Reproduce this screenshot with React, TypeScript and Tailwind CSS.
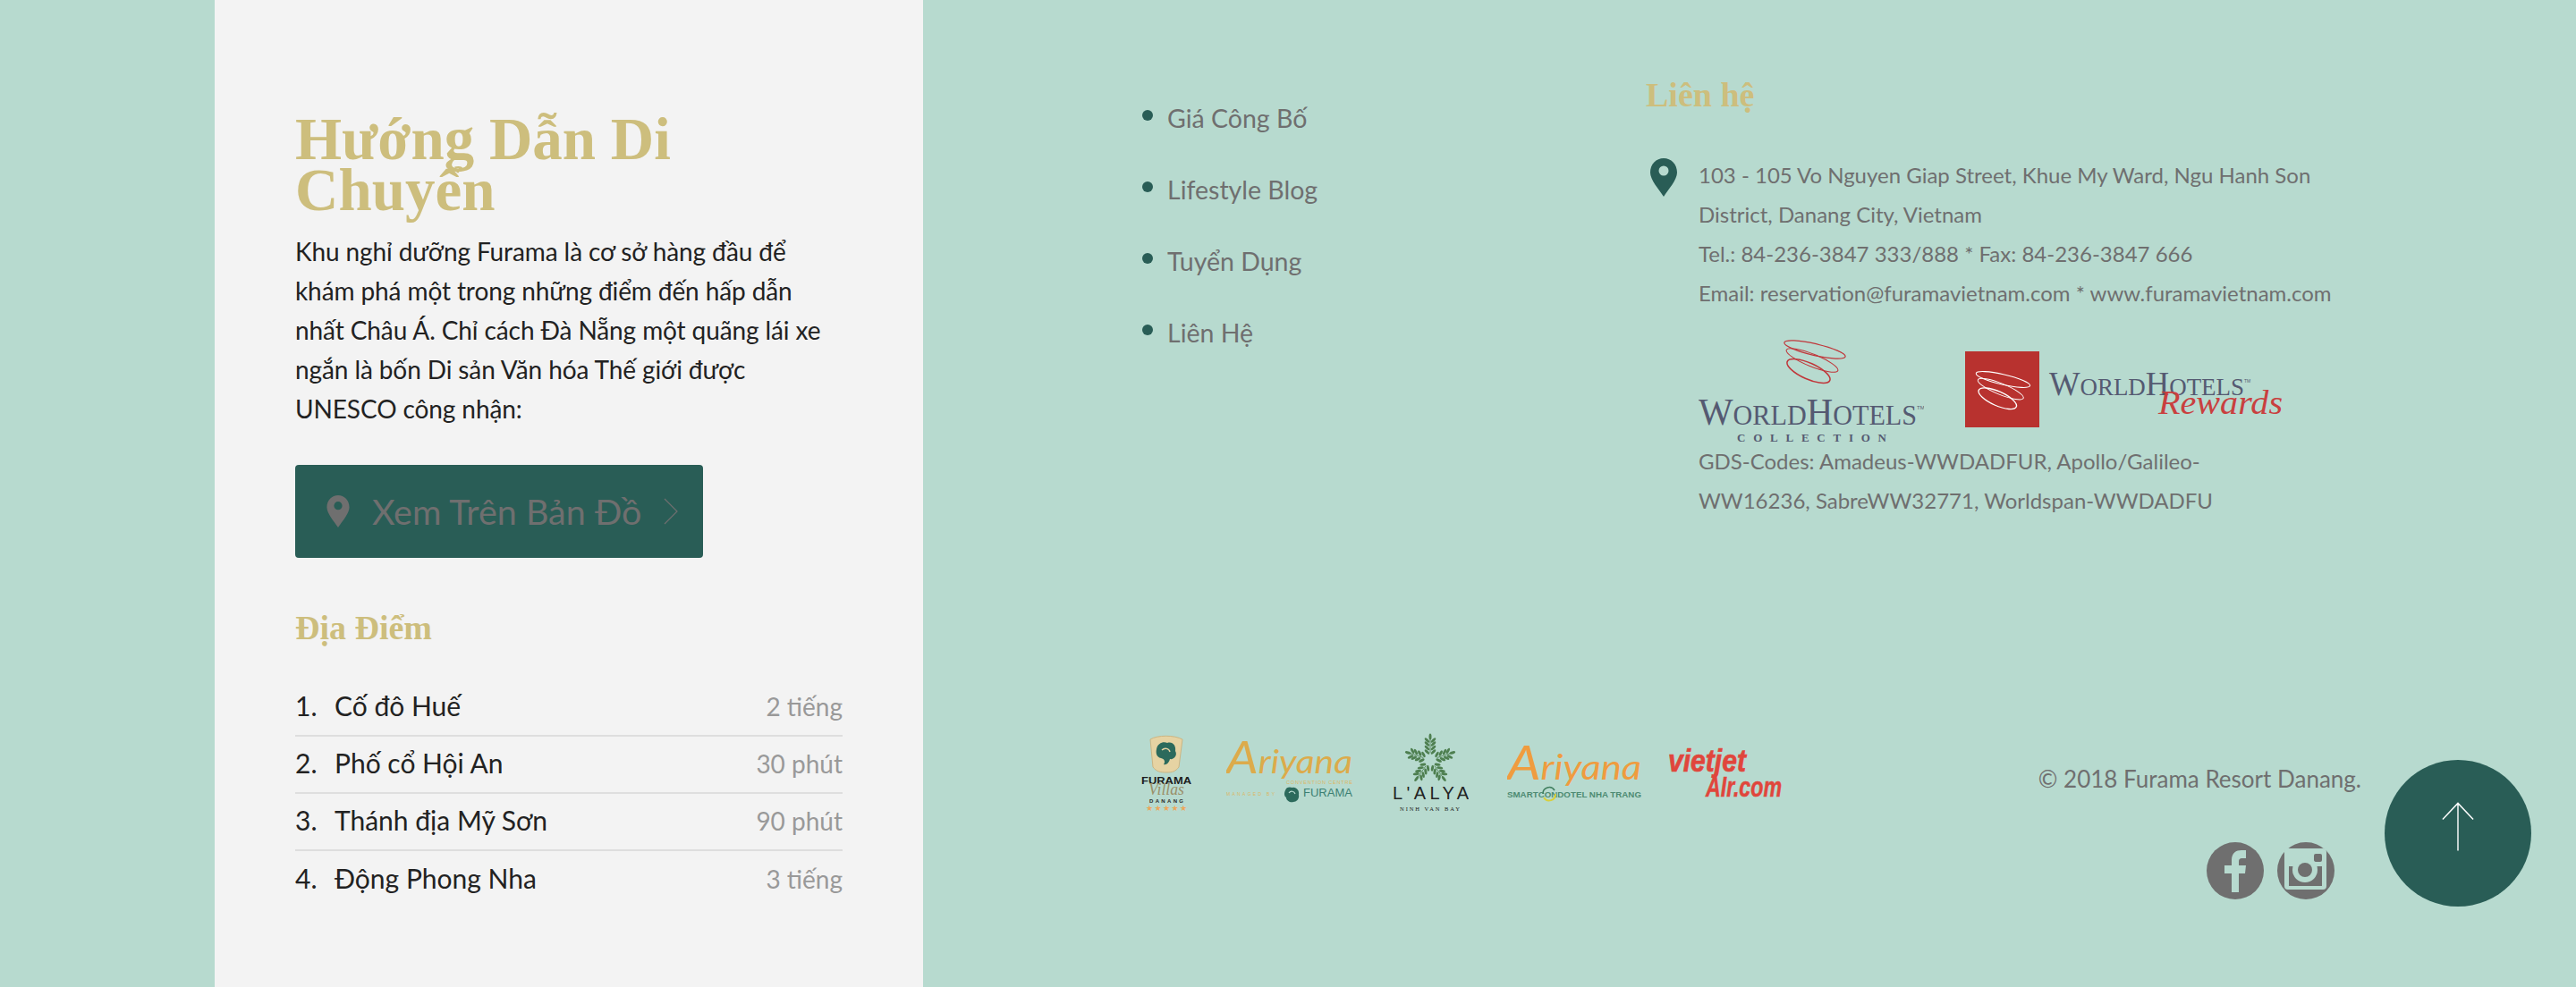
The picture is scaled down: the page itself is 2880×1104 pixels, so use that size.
import React from "react";

const SERIF = "Liberation Serif, serif";
const SANS = "Liberation Sans, sans-serif";

function Swirl({ color, x, y, w, h }: { color: string; x: number; y: number; w: number; h: number }) {
  return (
    <svg x={x} y={y} width={w} height={h} viewBox="0 0 71 52" fill="none" stroke={color}>
      <ellipse cx="36" cy="13" rx="35" ry="6.500" transform="rotate(13 36 13)" strokeWidth="1.200" />
      <ellipse cx="33" cy="25" rx="31" ry="7" transform="rotate(22 33 25)" strokeWidth="1.100" />
      <ellipse cx="29" cy="37" rx="26" ry="9" transform="rotate(24 29 37)" strokeWidth="1.500" />
    </svg>
  );
}

function WorldCollection() {
  return (
    <svg width="252" height="118" viewBox="0 0 252 118" className="shrink-0">
      <Swirl color="#c0363a" x={94} y={0} w={71} h={52} />
      <text x="0" y="97" fill="#555a72" fontFamily={SERIF} fontSize="31" textLength="244" lengthAdjust="spacingAndGlyphs">
        <tspan fontSize="42">W</tspan>ORLD<tspan fontSize="42">H</tspan>OTELS
      </text>
      <text x="244" y="80" fill="#555a72" fontFamily={SANS} fontSize="6">TM</text>
      <text x="43" y="116" fill="#555a72" fontFamily={SERIF} fontSize="13" fontWeight="700" textLength="167">
        COLLECTION
      </text>
    </svg>
  );
}

function WorldRewards() {
  return (
    <svg width="355" height="118" viewBox="0 0 355 118" className="shrink-0">
      <rect x="0" y="15" width="83" height="85" fill="#b8322f" />
      <Swirl color="#ffffff" x={9} y={35} w={66} h={46} />
      <text x="94" y="64" fill="#555a72" fontFamily={SERIF} fontSize="28" textLength="218" lengthAdjust="spacingAndGlyphs">
        <tspan fontSize="38">W</tspan>ORLD<tspan fontSize="38">H</tspan>OTELS
      </text>
      <text x="312" y="50" fill="#555a72" fontFamily={SANS} fontSize="5">TM</text>
      <text x="216" y="85" fill="#c9403f" fontFamily={SERIF} fontSize="38" fontStyle="italic" textLength="139" lengthAdjust="spacingAndGlyphs">
        Rewards
      </text>
    </svg>
  );
}

function FuramaVillas() {
  return (
    <svg width="56" height="90" viewBox="0 0 56 90" className="shrink-0">
      <path d="M10 7C18 2 37 2 46 7L42 38C38 43 35 44 28 44C21 44 17 43 13 38Z" fill="#e6d3a3" stroke="#cbb583" strokeWidth="1" />
      <path d="M17 18C18 11 25 9 29 11C35 9 39 14 38 20C41 25 36 30 32 29C31 33 28 36 25 35C27 32 26 29 22 28C17 27 16 22 17 18Z" fill="#2c6a5c" />
      <path d="M23 19C26 16 31 17 32 21" fill="none" stroke="#e6d3a3" strokeWidth="1.400" />
      <text x="0" y="57" fill="#1d1d1d" fontFamily={SANS} fontWeight="700" fontSize="11" textLength="56" lengthAdjust="spacingAndGlyphs">FURAMA</text>
      <text x="8" y="69" fill="#9a8f68" fontFamily={SERIF} fontStyle="italic" fontSize="18" textLength="40" lengthAdjust="spacingAndGlyphs">Villas</text>
      <text x="9" y="78" fill="#2a2a2a" fontFamily={SANS} fontWeight="700" fontSize="6" textLength="38">DANANG</text>
      <text x="5" y="87" fill="#eda65a" fontFamily="DejaVu Sans, sans-serif" fontSize="9" textLength="46">★★★★★</text>
    </svg>
  );
}

function AriyanaConvention() {
  return (
    <svg width="141" height="90" viewBox="0 0 141 90" className="shrink-0">
      <text x="0" y="45" fill="#dcab4b" fontFamily="Lato, sans-serif" fontStyle="italic" fontSize="36" textLength="141" lengthAdjust="spacingAndGlyphs">
        <tspan fontSize="50">A</tspan>riyana
      </text>
      <text x="67" y="57" fill="#dcb765" fontFamily={SANS} fontSize="5.500" textLength="74">CONVENTION CENTRE</text>
      <text x="0" y="70" fill="#dcb765" fontFamily={SANS} fontSize="5" textLength="54">MANAGED BY</text>
      <path d="M66 64C67 60 71 60 74 61C78 60 82 64 81 69C82 74 78 77 75 77C72 78 67 76 67 72C64 70 65 66 66 64Z" fill="#2c6a5c" />
      <path d="M70 67C72 64 76 65 77 68" fill="none" stroke="#b7dacf" strokeWidth="1.200" />
      <text x="86" y="71" fill="#3c7f72" fontFamily={SANS} fontSize="12" textLength="55" lengthAdjust="spacingAndGlyphs">FURAMA</text>
    </svg>
  );
}

function Alya() {
  const arms = [0, 72, 144, 216, 288];
  const steps = [9, 13.5, 18, 22];
  return (
    <svg width="85" height="90" viewBox="0 0 85 90" className="shrink-0">
      {arms.map((a) => (
        <g key={a} transform={`rotate(${a} 42 30)`}>
          <path d="M42 22V6" stroke="#4e7f50" strokeWidth="0.800" />
          {steps.map((s) => (
            <g key={s}>
              <ellipse cx="38.500" cy={30 - s} rx="3.500" ry="1.500" fill="#4e7f50" transform={`rotate(45 38.5 ${30 - s})`} />
              <ellipse cx="45.500" cy={30 - s} rx="3.500" ry="1.500" fill="#4e7f50" transform={`rotate(-45 45.5 ${30 - s})`} />
            </g>
          ))}
          <ellipse cx="42" cy="4" rx="1.500" ry="3.500" fill="#4e7f50" />
        </g>
      ))}
      <text x="0" y="74" fill="#232323" fontFamily={SANS} fontSize="20" textLength="85">L'ALYA</text>
      <text x="8" y="87" fill="#232323" fontFamily={SERIF} fontSize="6.500" textLength="67">NINH VAN BAY</text>
    </svg>
  );
}

function AriyanaSmart() {
  return (
    <svg width="150" height="90" viewBox="0 0 150 90" className="shrink-0">
      <text x="0" y="52" fill="#ef9c3f" fontFamily="Lato, sans-serif" fontStyle="italic" fontSize="38" textLength="150" lengthAdjust="spacingAndGlyphs">
        <tspan fontSize="52">A</tspan>riyana
      </text>
      <text x="0" y="72" fill="#4d8a72" fontFamily={SANS} fontWeight="700" fontSize="8.500" textLength="150" lengthAdjust="spacingAndGlyphs">SMARTCONDOTEL NHA TRANG</text>
      <path d="M40 68A7 7 0 0 1 53 64" fill="none" stroke="#3f7e5d" strokeWidth="1.600" />
      <path d="M41 72A7 7 0 0 0 54 68" fill="none" stroke="#d8cf3c" strokeWidth="2" />
    </svg>
  );
}

function Vietjet() {
  return (
    <svg width="128" height="90" viewBox="0 0 128 90" className="shrink-0">
      <text x="1" y="43" fill="#e0463c" stroke="#e0463c" strokeWidth="0.700" fontFamily={SANS} fontWeight="700" fontStyle="italic" fontSize="35" textLength="87" lengthAdjust="spacingAndGlyphs">vietjet</text>
      <text x="43" y="71" fill="#e0463c" stroke="#e0463c" strokeWidth="0.500" fontFamily={SANS} fontWeight="700" fontStyle="italic" fontSize="32" textLength="85" lengthAdjust="spacingAndGlyphs">AIr.com</text>
    </svg>
  );
}

function Pin({ color, hole, className }: { color: string; hole: string; className: string }) {
  return (
    <svg viewBox="0 0 30 43" className={className}>
      <path d="M15 0C6.700 0 0 6.700 0 16C0 24 9 34 15 43C21 34 30 24 30 16C30 6.700 23.300 0 15 0Z" fill={color} />
      <circle cx="15" cy="14" r="5.500" fill={hole} />
    </svg>
  );
}

const places = [
  ["1.", "Cố đô Huế", "2 tiếng"],
  ["2.", "Phố cổ Hội An", "30 phút"],
  ["3.", "Thánh địa Mỹ Sơn", "90 phút"],
  ["4.", "Động Phong Nha", "3 tiếng"],
];

const links = ["Giá Công Bố", "Lifestyle Blog", "Tuyển Dụng", "Liên Hệ"];

export default function App() {
  return (
    <div className="relative flex h-[1104px] w-[2880px] overflow-hidden bg-[#b7dacf] font-['Lato','Noto_Sans',sans-serif]">
      <div className="w-[240px] shrink-0" />
      <section className="h-full w-[792px] shrink-0 bg-[#f3f3f3] pl-[90px] pt-[127px]">
        <h1 className="font-['Liberation_Serif',serif] text-[67px] leading-[57px] font-bold text-[#cdbe7d]">
          Hướng Dẫn Di
          <br />
          Chuyển
        </h1>
        <p className="mt-[18px] text-[28px] leading-[44px] tracking-[-0.1px] text-[#222222]">
          Khu nghỉ dưỡng Furama là cơ sở hàng đầu để
          <br />
          khám phá một trong những điểm đến hấp dẫn
          <br />
          nhất Châu Á. Chỉ cách Đà Nẵng một quãng lái xe
          <br />
          ngắn là bốn Di sản Văn hóa Thế giới được
          <br />
          UNESCO công nhận:
        </p>
        <div className="mt-[41px] flex h-[104px] w-[456px] items-center rounded-[4px] bg-[#295d56] pl-[35px] text-[#6f6f6f]">
          <Pin color="#6f6f6f" hole="#295d56" className="h-[36px] w-[26px] shrink-0" />
          <span className="ml-[25px] text-[39.500px] leading-none">Xem Trên Bản Đồ</span>
          <svg viewBox="0 0 16 30" className="ml-[25px] h-[30px] w-[16px] shrink-0" fill="none" stroke="#6f6f6f" strokeWidth="1.200">
            <path d="M1 1L15 15L1 29" />
          </svg>
        </div>
        <h2 className="mt-[56px] font-['Liberation_Serif',serif] text-[38px] leading-[44px] font-bold text-[#cdbe7d]">Địa Điểm</h2>
        <ul className="mt-[36px] w-[612px]">
          {places.map((p, i) => (
            <li key={p[0]} className={`flex h-[64px] items-center justify-between pb-[3px] ${i < 3 ? "border-b-2 border-[#dedede]" : ""}`}>
              <span className="flex text-[30px] text-[#222222]">
                <span className="w-[44px]">{p[0]}</span>
                {p[1]}
              </span>
              <span className="text-[28px] text-[#999999]">{p[2]}</span>
            </li>
          ))}
        </ul>
      </section>

      <section className="flex h-full flex-1 flex-col pl-[245px]">
        <div className="flex h-[820px] shrink-0">
          <ul className="w-[563px] shrink-0 pt-[92px]">
            {links.map((l) => (
              <li key={l} className="flex h-[80px] items-center text-[28.500px] text-[#6f6f6f]">
                <span className="mb-[6px] mr-[16px] h-[12px] w-[12px] rounded-full bg-[#295d56]" />
                {l}
              </li>
            ))}
          </ul>
          <div className="pt-[84px]">
            <h3 className="font-['Liberation_Serif',serif] text-[38px] leading-[44px] font-bold text-[#cdbe7d]">Liên hệ</h3>
            <div className="mt-[46px] flex">
              <Pin color="#295d56" hole="#b7dacf" className="ml-[5px] mt-[3px] h-[43px] w-[30px] shrink-0" />
              <div className="ml-[24px] text-[24px] leading-[44px] text-[#6f6f6f]">
                <p>
                  103 - 105 Vo Nguyen Giap Street, Khue My Ward, Ngu Hanh Son
                  <br />
                  District, Danang City, Vietnam
                  <br />
                  Tel.: 84-236-3847 333/888 * Fax: 84-236-3847 666
                  <br />
                  Email: reservation@furamavietnam.com * www.furamavietnam.com
                </p>
                <div className="mt-[28px] flex h-[116px] items-start">
                  <WorldCollection />
                  <div className="ml-[46px]">
                    <WorldRewards />
                  </div>
                </div>
                <p>
                  GDS-Codes: Amadeus-WWDADFUR, Apollo/Galileo-
                  <br />
                  WW16236, SabreWW32771, Worldspan-WWDADFU
                </p>
              </div>
            </div>
          </div>
        </div>
        <div className="flex flex-1 items-start pr-[240px]">
          <div className="-ml-[1px] flex">
            <FuramaVillas />
            <div className="ml-[39px]">
              <AriyanaConvention />
            </div>
            <div className="ml-[45px]">
              <Alya />
            </div>
            <div className="ml-[43px]">
              <AriyanaSmart />
            </div>
            <div className="ml-[29px]">
              <Vietjet />
            </div>
          </div>
          <div className="ml-auto flex flex-col items-end pt-[30px]">
            <p className="text-[26px] leading-[42px] text-[#6f6f6f]">© 2018 Furama Resort Danang.</p>
            <div className="mr-[30px] mt-[50px] flex gap-[15px]">
              <span className="flex h-[64px] w-[64px] items-center justify-center rounded-full bg-[#6f6f6f]">
                <svg viewBox="0 0 64 64" className="h-[64px] w-[64px]">
                  <path d="M28 56V35H20V26H28V20C28 12 33 9 39 9H44V18H40C37 18 36 19 36 22V26H44L43 35H36V56Z" fill="#b7dacf" />
                </svg>
              </span>
              <span className="flex h-[64px] w-[64px] items-center justify-center rounded-full bg-[#6f6f6f]">
                <svg viewBox="0 0 64 64" className="h-[64px] w-[64px]">
                  <rect x="8" y="7" width="47" height="46" rx="4" fill="#b7dacf" />
                  <rect x="41" y="13" width="9" height="9" rx="2" fill="#6f6f6f" />
                  <rect x="13" y="27" width="37" height="22" fill="#6f6f6f" />
                  <circle cx="31" cy="31" r="14" fill="#b7dacf" />
                  <circle cx="31" cy="31" r="8" fill="#6f6f6f" />
                </svg>
              </span>
            </div>
          </div>
        </div>
      </section>

      <div className="absolute bottom-[90px] right-[50px] flex h-[164px] w-[164px] items-center justify-center rounded-full bg-[#295d56]">
        <svg viewBox="0 0 40 58" className="mb-[14px] h-[56px] w-[38px]" fill="none" stroke="#ffffff" strokeWidth="1.500">
          <path d="M20 57V1M2 20L20 1L38 20" />
        </svg>
      </div>
    </div>
  );
}
